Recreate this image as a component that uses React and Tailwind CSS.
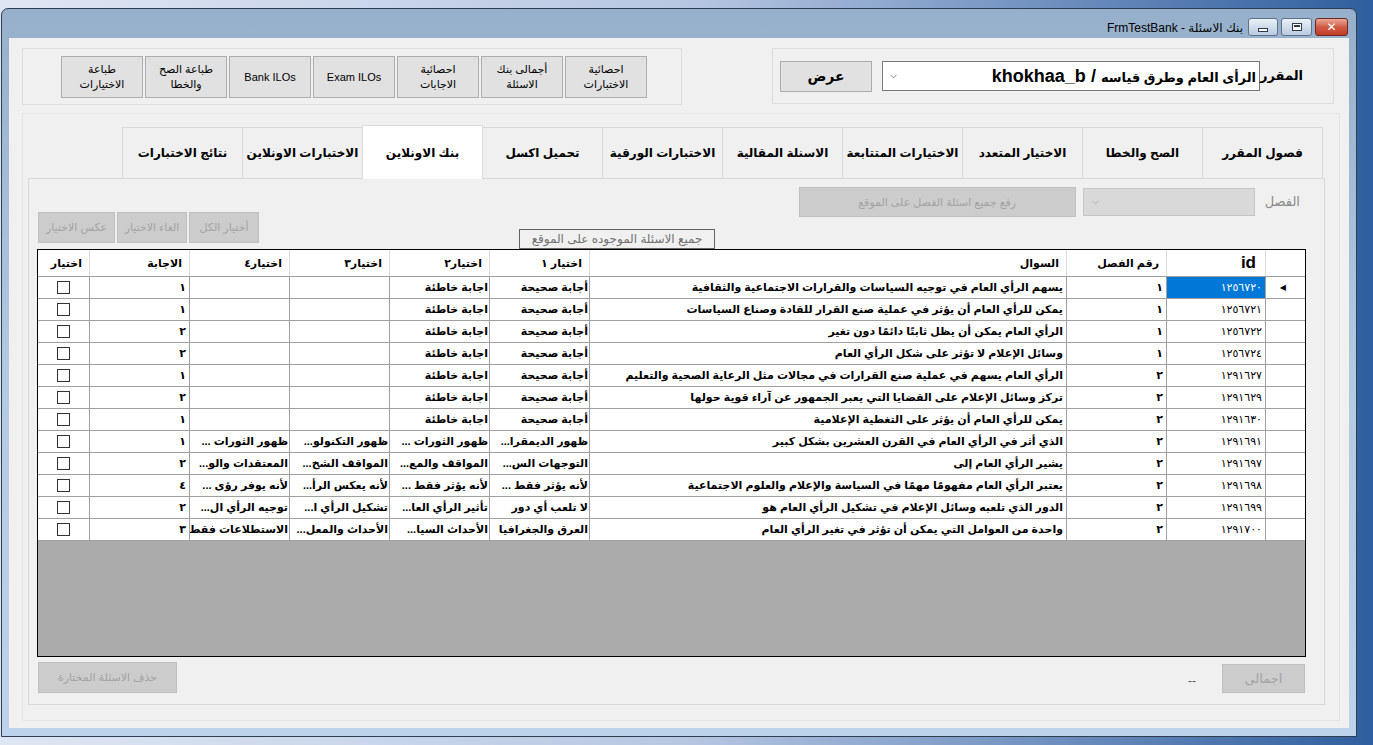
import { ChevronDown } from 'lucide-react'

const topButtons = [
  ['احصائية', 'الاختبارات'],
  ['أجمالى بنك', 'الاسئلة'],
  ['احصائية', 'الاجابات'],
  ['Exam ILOs'],
  ['Bank ILOs'],
  ['طباعة الصح', 'والخطا'],
  ['طباعة', 'الاختيارات'],
]

const tabs = [
  'فصول المقرر',
  'الصح والخطا',
  'الاختيار المتعدد',
  'الاختيارات المتتابعة',
  'الاسنلة المقالية',
  'الاختبارات الورقية',
  'تحميل اكسل',
  'بنك الاونلاين',
  'الاختبارات الاونلاين',
  'نتائج الاختبارات',
]

// column widths, right to left: row header, id, chapter, question, 4 choices, answer, select
const columns = [
  { key: 'rh', w: 'w-[40px]', title: '' },
  { key: 'id', w: 'w-[99px]', title: 'id' },
  { key: 'ch', w: 'w-[100px]', title: 'رقم الفصل' },
  { key: 'q', w: 'w-[477px]', title: 'السوال' },
  { key: 'c1', w: 'w-[100px]', title: 'اختيار ١' },
  { key: 'c2', w: 'w-[100px]', title: 'اختيار٢' },
  { key: 'c3', w: 'w-[100px]', title: 'اختيار٣' },
  { key: 'c4', w: 'w-[100px]', title: 'اختيار٤' },
  { key: 'ans', w: 'w-[100px]', title: 'الاجابة' },
  { key: 'sel', w: 'w-[51px]', title: 'اختيار' },
]

const tf = ['أجابة صحيحة', 'اجابة خاطئة', '', '']

const rows = [
  { id: '١٢٥٦٧٢٠', ch: '١', q: 'يسهم الرأي العام في توجيه السياسات والقرارات الاجتماعية والثقافية', c: tf, ans: '١' },
  { id: '١٢٥٦٧٢١', ch: '١', q: 'يمكن للرأي العام أن يؤثر في عملية صنع القرار للقادة وصناع السياسات', c: tf, ans: '١' },
  { id: '١٢٥٦٧٢٢', ch: '١', q: 'الرأي العام يمكن أن يظل ثابتًا دائمًا دون تغير', c: tf, ans: '٢' },
  { id: '١٢٥٦٧٢٤', ch: '١', q: 'وسائل الإعلام لا تؤثر على شكل الرأي العام', c: tf, ans: '٢' },
  { id: '١٢٩١٦٢٧', ch: '٢', q: 'الرأي العام يسهم في عملية صنع القرارات في مجالات مثل الرعاية الصحية والتعليم', c: tf, ans: '١' },
  { id: '١٢٩١٦٢٩', ch: '٢', q: 'تركز وسائل الإعلام على القضايا التي يعبر الجمهور عن آراء قوية حولها', c: tf, ans: '٢' },
  { id: '١٢٩١٦٣٠', ch: '٢', q: 'يمكن للرأي العام أن يؤثر على التغطية الإعلامية', c: tf, ans: '١' },
  {
    id: '١٢٩١٦٩١',
    ch: '٢',
    q: 'الذي أثر في الرأي العام في القرن العشرين بشكل كبير',
    c: ['ظهور الديمقرا...', 'ظهور الثورات ...', 'ظهور التكنولو...', 'ظهور الثورات ...'],
    ans: '١',
  },
  {
    id: '١٢٩١٦٩٧',
    ch: '٢',
    q: 'يشير الرأي العام إلى',
    c: ['التوجهات الس...', 'المواقف والمع...', 'المواقف الشخ...', 'المعتقدات والو...'],
    ans: '٢',
  },
  {
    id: '١٢٩١٦٩٨',
    ch: '٢',
    q: 'يعتبر الرأي العام مفهومًا مهمًا في السياسة والإعلام والعلوم الاجتماعية',
    c: ['لأنه يؤثر فقط ...', 'لأنه يؤثر فقط ...', 'لأنه يعكس الرأ...', 'لأنه يوفر رؤى ...'],
    ans: '٤',
  },
  {
    id: '١٢٩١٦٩٩',
    ch: '٢',
    q: 'الدور الذي تلعبه وسائل الإعلام في تشكيل الرأي العام هو',
    c: ['لا تلعب أي دور', 'تأثير الرأي العا...', 'تشكيل الرأي ا...', 'توجيه الرأي ال...'],
    ans: '٢',
  },
  {
    id: '١٢٩١٧٠٠',
    ch: '٢',
    q: 'واحدة من العوامل التي يمكن أن تؤثر في تغير الرأي العام',
    c: ['العرق والجغرافيا', 'الأحداث السيا...', 'الأحداث والمعل...', 'الاستطلاعات فقط'],
    ans: '٣',
  },
]

function DisabledButton({ className, children }) {
  return (
    <div
      className={`flex items-center justify-center whitespace-nowrap border border-[#bfbfbf] bg-[#cccccc] text-[11px] text-[#a3a3a3] ${className}`}
    >
      {children}
    </div>
  )
}

function Cell({ col, children, selected, tight }) {
  const last = col.key === 'sel'
  return (
    <div
      className={`flex h-full shrink-0 items-center overflow-hidden whitespace-nowrap ${tight ? 'px-[1px]' : 'px-[3px]'} ${col.w} ${
        last ? 'justify-center' : 'border-l border-[#a0a0a0]'
      } ${selected ? 'bg-[#0078d7] text-white' : 'bg-white text-black'}`}
    >
      {children}
    </div>
  )
}

function QuestionGrid() {
  return (
    <div className="ml-[8px] flex h-[408px] w-[1269px] flex-col border border-black bg-[#ababab]" dir="rtl">
      <div className="flex h-[27px] shrink-0 border-b border-[#a0a0a0] bg-white">
        {columns.map((col) => (
          <div
            key={col.key}
            className={`flex h-full shrink-0 items-center whitespace-nowrap pr-[7px] ${col.w} ${
              col.key === 'sel' ? '' : 'border-l border-[#dcdcdc]'
            } ${col.key === 'id' ? 'pr-[9px] text-[17px]' : 'text-[11px]'} font-bold text-black`}
          >
            {col.title}
          </div>
        ))}
      </div>
      {rows.map((row, i) => (
        <div key={row.id} className="flex h-[22px] shrink-0 border-b border-[#a0a0a0] text-[11px] font-bold">
          <Cell col={columns[0]}>
            {i === 0 && <span className="mr-[16px] text-[8px] leading-none text-black">◀</span>}
          </Cell>
          <Cell col={columns[1]} selected={i === 0}>
            <span className="font-normal">{row.id}</span>
          </Cell>
          <Cell col={columns[2]}>{row.ch}</Cell>
          <Cell col={columns[3]}>{row.q}</Cell>
          {row.c.map((text, k) => (
            <Cell key={k} col={columns[4 + k]} tight>
              {text}
            </Cell>
          ))}
          <Cell col={columns[8]}>{row.ans}</Cell>
          <Cell col={columns[9]}>
            <span className="h-[13px] w-[13px] border border-[#333333] bg-white" />
          </Cell>
        </div>
      ))}
    </div>
  )
}

function OnlineBankPage() {
  return (
    <div className="flex h-[527px] flex-col border border-[#d9d9d9] bg-[#f0f0f0]">
      <div className="flex h-[70px] shrink-0 pl-[9px] pr-[24px]">
        <div className="mb-[6px] flex gap-[2px] self-end">
          <DisabledButton className="h-[31px] w-[77px]">عكس الاختيار</DisabledButton>
          <DisabledButton className="h-[31px] w-[70px]">الغاء الاختيار</DisabledButton>
          <DisabledButton className="h-[31px] w-[70px]">أختيار الكل</DisabledButton>
        </div>
        <div className="ml-[260px] flex h-[20px] w-[196px] items-center justify-center self-end border border-[#646464] text-[12px] text-[#707070]">
          جميع الاسئلة الموجوده على الموقع
        </div>
        <div className="ml-auto mt-[8px] flex items-center self-start">
          <DisabledButton className="h-[30px] w-[277px]">رفع جميع اسئلة الفصل على الموقع</DisabledButton>
          <div className="ml-[7px] flex h-[28px] w-[172px] items-center border border-[#c6c6c6] bg-[#d9d9d9] pl-[6px] text-[#a0a0a0]">
            <ChevronDown size={11} strokeWidth={1.5} />
          </div>
          <span className="ml-[10px] text-[13px] text-[#8a8a8a]">الفصل</span>
        </div>
      </div>

      <QuestionGrid />

      <div className="flex h-[36px] shrink-0 pl-[9px] pr-[19px] pt-[5px]">
        <DisabledButton className="h-[31px] w-[139px]">حذف الاسئلة المختارة</DisabledButton>
        <span className="ml-auto mr-[26px] mt-[10px] text-[12px] text-[#555555]">--</span>
        <DisabledButton className="mt-[2px] h-[29px] w-[83px] text-[13px]">اجمالى</DisabledButton>
      </div>
    </div>
  )
}

function TitleButton({ children, className }) {
  return (
    <div className={`flex h-[18px] items-center justify-center rounded-[3px] border ${className}`}>{children}</div>
  )
}

export default function App() {
  return (
    <div
      className="h-[745px] w-[1373px] overflow-hidden bg-gradient-to-r from-[#dfe6f3] via-[#b7c7e2] to-[#2f5f9e] pl-[1px] pt-[8px]"
      style={{ fontFamily: '"Liberation Sans", "DejaVu Sans", sans-serif' }}
    >
      <div className="flex h-[729px] w-[1356px] flex-col rounded-t-[7px] border border-[#2f3f52] bg-gradient-to-b from-[#96afcb] via-[#b2c9e2] to-[#bcd3eb] px-[7px] pb-[8px]">
        {/* caption */}
        <div className="flex h-[29px] shrink-0 items-start justify-end pr-[1px] pt-[9px]">
          <span className="mr-[5px] mt-[1px] text-[12px] text-black">FrmTestBank - بنك الاسئلة</span>
          <TitleButton className="w-[30px] border-[#5f7187] bg-gradient-to-b from-[#e9f0f8] to-[#b9cbe0]">
            <span className="mt-[5px] h-[4px] w-[10px] border border-[#2e3a48] bg-white" />
          </TitleButton>
          <TitleButton className="ml-[3px] w-[31px] border-[#5f7187] bg-gradient-to-b from-[#e9f0f8] to-[#b9cbe0]">
            <span className="h-[8px] w-[10px] border border-[#2e3a48] bg-white p-[1px]">
              <span className="block h-full w-full border-t-2 border-[#2e3a48]" />
            </span>
          </TitleButton>
          <TitleButton className="ml-[3px] w-[33px] border-[#6e2a22] bg-gradient-to-b from-[#e9a99a] via-[#d05a44] to-[#c13c26]">
            <span className="text-[12px] font-bold leading-none text-white">✕</span>
          </TitleButton>
        </div>

        {/* client area */}
        <div className="flex flex-1 flex-col bg-[#f0f0f0] pt-[10px]" dir="ltr">
          <div className="flex h-[57px] shrink-0 justify-between pl-[13px] pr-[15px]">
            <div className="flex h-[57px] w-[660px] justify-end border border-[#dcdcdc] pr-[34px] pt-[7px]">
              <div className="flex h-[42px] gap-[2px]" dir="rtl">
                {topButtons.map((lines) => (
                  <div
                    key={lines.join()}
                    className="flex w-[82px] flex-col items-center justify-center border border-[#adadad] bg-[#e1e1e1] text-[11px] leading-[15px] text-black"
                  >
                    {lines.map((l) => (
                      <span key={l}>{l}</span>
                    ))}
                  </div>
                ))}
              </div>
            </div>

            <div className="flex h-[56px] w-[562px] items-center border border-[#dcdcdc] pl-[7px] pr-[30px]">
              <div className="flex h-[31px] w-[94px] items-center justify-center border border-[#adadad] bg-[#e1e1e1] text-[14px] font-bold text-black">
                عرض
              </div>
              <div className="ml-[10px] flex h-[30px] w-[378px] shrink-0 items-center overflow-hidden border border-[#7a7a7a] bg-white pl-[5px]">
                <ChevronDown size={11} strokeWidth={1.5} className="shrink-0 text-[#555555]" />
                <span className="ml-auto mr-[3px] whitespace-nowrap font-bold text-black" dir="rtl">
                  <span className="text-[13px]">الرأى العام وطرق قياسه</span>
                  <span className="text-[18px]"> / khokhaa_b</span>
                </span>
              </div>
              <span className="ml-auto text-[13px] font-bold text-black">المقرر</span>
            </div>
          </div>

          {/* tab control frame */}
          <div className="ml-[13px] mt-[8px] flex h-[608px] w-[1318px] flex-col border border-[#e3e3e3] pl-[5px] pt-[10px]">
            <div className="w-[1297px]">
              <div className="flex h-[54px] items-end pr-[2px]" dir="rtl">
                {tabs.map((t) =>
                  t === 'بنك الاونلاين' ? (
                    <div
                      key={t}
                      className="relative z-10 -mb-px -ml-px flex h-[54px] w-[121px] items-center justify-center border border-b-0 border-[#d9d9d9] bg-white text-[12px] font-bold text-black"
                    >
                      {t}
                    </div>
                  ) : (
                    <div
                      key={t}
                      className="-ml-px flex h-[51px] w-[121px] items-center justify-center border border-b-0 border-[#d9d9d9] bg-[#f0f0f0] text-[12px] font-bold text-black"
                    >
                      {t}
                    </div>
                  ),
                )}
              </div>
              <OnlineBankPage />
            </div>
          </div>
        </div>
      </div>
    </div>
  )
}
